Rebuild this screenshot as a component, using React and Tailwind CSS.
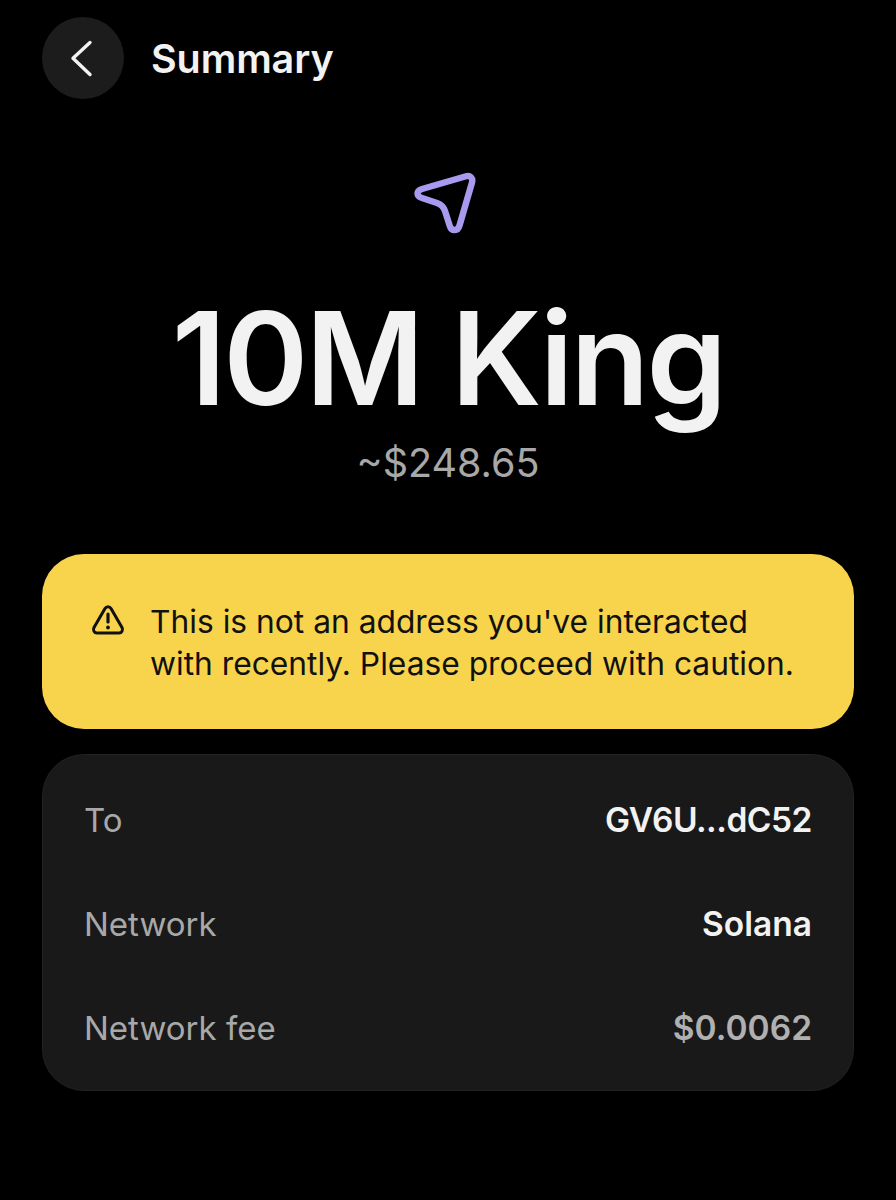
import React from "react";

const Row = ({ label, value, valueClass }) => (
  <div className="flex items-center justify-between h-[104px]">
    <span className="text-[33px] text-[#a8a8a8]">{label}</span>
    <span className={`text-[33.5px] font-semibold pb-[2px] ${valueClass}`}>{value}</span>
  </div>
);

const App = () => {
  return (
    <div
      className="w-[896px] h-[1200px] bg-black px-[42px] pt-[17px] overflow-hidden text-[#f2f2f2]"
      style={{ fontFamily: "Inter, 'Liberation Sans', sans-serif" }}
    >
      {/* header */}
      <div className="flex items-center gap-[27px]">
        <button className="w-[82px] h-[82px] rounded-full bg-[#1c1c1c] flex items-center justify-center">
          <svg width="82" height="82" viewBox="0 0 82 82" fill="none">
            <path d="M48 25.5 L31 41.3 L48 57.5" stroke="#f2f2f2" strokeWidth="3.4" strokeLinecap="round" strokeLinejoin="round" />
          </svg>
        </button>
        <h1 className="pt-[4px] text-[39.5px] font-semibold leading-none tracking-[-0.1px]">Summary</h1>
      </div>

      {/* amount */}
      <div className="flex flex-col items-center">
        <svg className="mt-[73px] -ml-[6px]" width="62" height="62" viewBox="0 0 62 62" fill="none">
          <path
            d="M8 17 L52 4.2 C56 3 59.2 6 58 10.5 L45.5 53.5 C43.8 59.5 37.5 59.5 35.8 54 L31 39 C29.5 34.5 27.5 32.5 23 31 L8 26 C2 24 2 19 8 17 Z"
            stroke="#a99af0"
            strokeWidth="6.4"
            strokeLinejoin="round"
          />
        </svg>
        <div className="mt-[49px] text-[129px] font-semibold leading-[150px] tracking-[-3px]">10M King</div>
        <div className="mt-[5px] text-[39.5px] leading-[50px] text-[#a8a8a8]">~$248.65</div>
      </div>

      {/* warning */}
      <div className="mt-[66px] h-[175px] rounded-[42px] bg-[#f8d44c] flex items-center pl-[49px] gap-[25px] text-[#111111]">
        <svg className="shrink-0 -mt-[44px]" width="34" height="32" viewBox="0 0 34 32" fill="none">
          <path
            d="M14 4.5 C15.4 2 18.6 2 20 4.5 L31 23.5 C32.4 26 30.8 29 28 29 H6 C3.2 29 1.6 26 3 23.5 Z"
            stroke="#111111"
            strokeWidth="3"
            strokeLinejoin="round"
          />
          <path d="M17 10 V18" stroke="#111111" strokeWidth="3.2" strokeLinecap="round" />
          <circle cx="17" cy="23.5" r="1.9" fill="#111111" />
        </svg>
        <p className="pt-[2px] text-[31.75px] leading-[42px]">
          This is not an address you've interacted
          <br />
          with recently. Please proceed with caution.
        </p>
      </div>

      {/* details */}
      <div className="mt-[25px] h-[337px] rounded-[42px] bg-[#191919] border border-[#222222] pl-[41px] pr-[41px] py-[14px]">
        <Row label="To" value="GV6U...dC52" valueClass="text-[#f2f2f2] tracking-[-0.5px]" />
        <Row label="Network" value="Solana" valueClass="text-[#f2f2f2]" />
        <Row label="Network fee" value="$0.0062" valueClass="text-[#b0b0b0]" />
      </div>
    </div>
  );
};

export default App;
